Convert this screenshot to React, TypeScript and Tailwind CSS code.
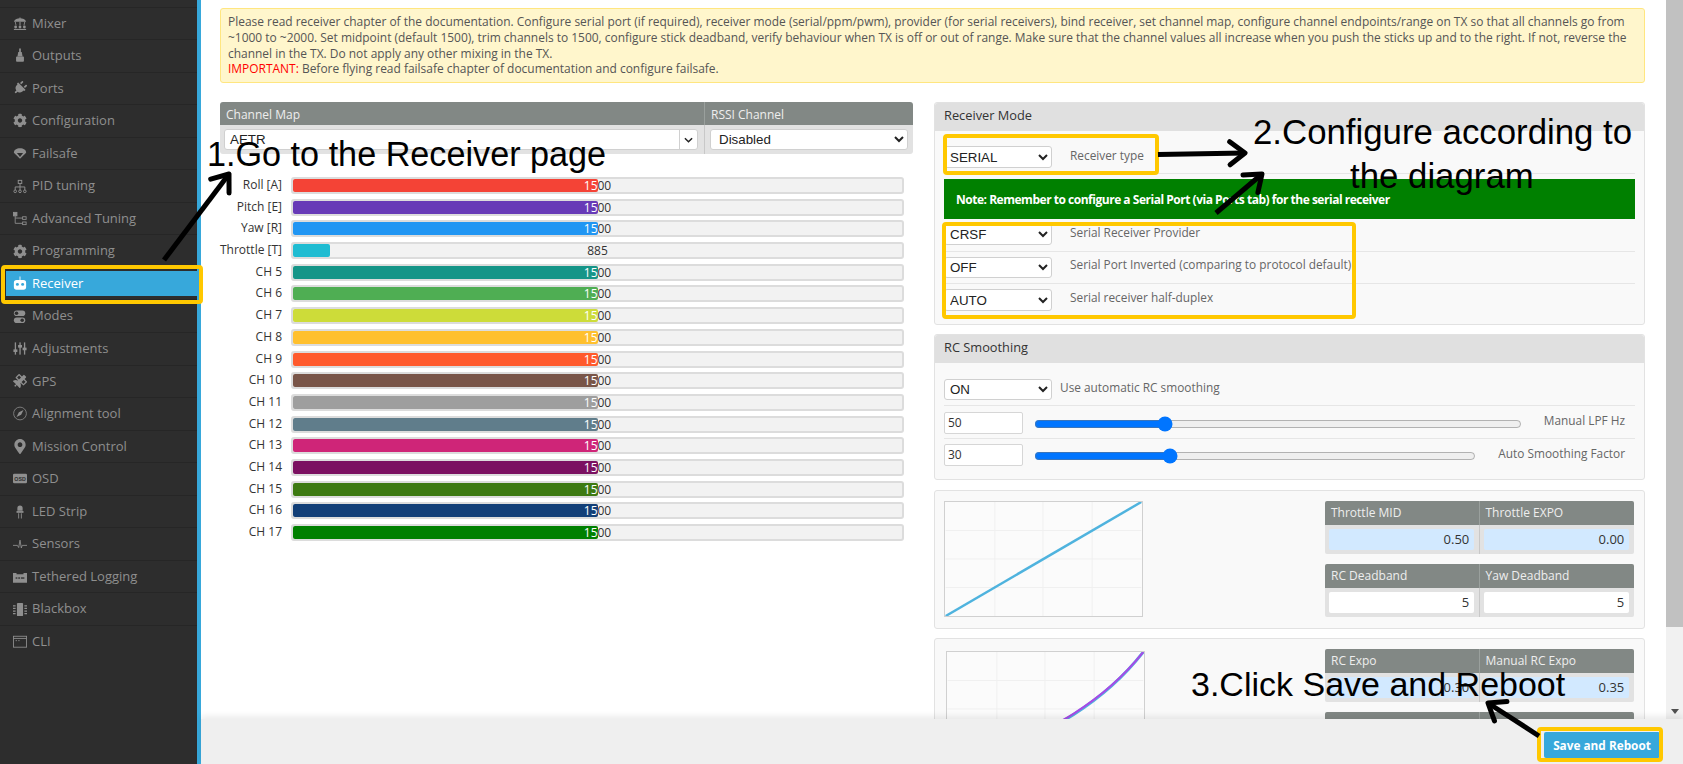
import React from "react";
import { FaCog, FaPlug, FaSatellite, FaMapMarkerAlt } from "react-icons/fa";

const Mixer = () => (
  <svg viewBox="0 0 16 16" width="15" height="15" fill="currentColor"><path d="M1 6c1-3 4-4 7-4s6 1 7 4z" /><rect x="7.5" y="1" width="1" height="2" /><path d="M7.4 6h1.2v4H7.4zM3 6l1 4H3L2 6zM13 6l-1 4h1l1-4z" /><circle cx="3" cy="12" r="1.6" /><circle cx="8" cy="12" r="1.6" /><circle cx="13" cy="12" r="1.6" /><rect x="1" y="14.2" width="14" height="1.2" /></svg>
);
const Outputs = () => (
  <svg viewBox="0 0 16 16" width="15" height="15" fill="currentColor"><rect x="7" y="0" width="2" height="4" /><path d="M6 4h4l1 5H5z" /><rect x="3.500" y="9" width="9" height="6" rx="1" /></svg>
);
const Parachute = () => (
  <svg viewBox="0 0 16 16" width="15" height="15" fill="currentColor"><path d="M1 7c0-3 3-5 7-5s7 2 7 5l-7 7z" /><path d="M4.500 7.500h7L8 12z" fill="#2d2d2d" /></svg>
);
const Tree = () => (
  <svg viewBox="0 0 16 16" width="15" height="15" fill="none" stroke="currentColor" strokeWidth="1.100"><rect x="6" y="1" width="4" height="3.500" /><path d="M8 4.500V12M2.500 12V8.500h11V12" /><circle cx="2.500" cy="13.500" r="1.500" /><circle cx="8" cy="13.500" r="1.500" /><circle cx="13.500" cy="13.500" r="1.500" /></svg>
);
const Advanced = () => (
  <svg viewBox="0 0 16 16" width="15" height="15" fill="none" stroke="currentColor" strokeWidth="1"><rect x="0.500" y="1" width="4" height="4" fill="currentColor" /><rect x="11" y="6" width="4" height="3" /><rect x="11" y="12" width="4" height="3" /><path d="M2.500 5v8.500H11M2.500 7.500H11" /></svg>
);
const Robot = () => (
  <svg viewBox="0 0 16 16" width="15" height="15" fill="#fff"><rect x="7.500" y="0" width="1" height="4" /><path d="M1 7a3 3 0 0 1 3-3h8a3 3 0 0 1 3 3v5a3 3 0 0 1-3 3H4a3 3 0 0 1-3-3z" /><circle cx="5" cy="9" r="1.700" fill="#37a8db" /><circle cx="11" cy="9" r="1.700" fill="#37a8db" /></svg>
);
const Modes = () => (
  <svg viewBox="0 0 16 16" width="15" height="15" fill="currentColor"><rect x="1" y="1" width="13" height="6.500" rx="3.200" /><rect x="1" y="9" width="13" height="6.500" rx="3.200" /><circle cx="10.500" cy="12.250" r="2" fill="#2d2d2d" /><circle cx="4" cy="4.250" r="2" fill="#2d2d2d" /></svg>
);
const Adjust = () => (
  <svg viewBox="0 0 16 16" width="15" height="15" fill="currentColor"><rect x="2" y="1" width="1.500" height="14" /><rect x="7.300" y="1" width="1.500" height="14" /><rect x="12.500" y="1" width="1.500" height="14" /><rect x="0.500" y="9" width="4.500" height="3" /><rect x="5.800" y="4" width="4.500" height="3" /><rect x="11" y="7" width="4.500" height="3" /></svg>
);
const Compass = () => (
  <svg viewBox="0 0 16 16" width="15" height="15"><circle cx="8" cy="8" r="7.300" fill="none" stroke="currentColor" strokeWidth="0.900" /><path d="M12 4L9.300 9.300 4 12l2.700-5.300z" fill="currentColor" /></svg>
);
const Osd = () => (
  <svg viewBox="0 0 16 12" width="15" height="11"><rect x="0" y="0.500" width="16" height="11" rx="1.500" fill="currentColor" /><text x="8" y="8.500" textAnchor="middle" fontSize="6" fontWeight="700" fontFamily="Liberation Sans, sans-serif" fill="#2d2d2d">OSD</text></svg>
);
const Led = () => (
  <svg viewBox="0 0 16 16" width="15" height="15" fill="currentColor"><path d="M5 7V4a3 3 0 0 1 6 0v3z" /><rect x="4" y="7.500" width="8" height="2" /><rect x="6" y="10" width="1" height="6" /><rect x="9" y="10" width="1" height="6" /></svg>
);
const Pulse = () => (
  <svg viewBox="0 0 16 16" width="15" height="15" fill="none" stroke="currentColor" strokeWidth="1"><path d="M0 9h5l1.500 2.500L8 3l1.500 9L10.500 9H16" /></svg>
);
const Tether = () => (
  <svg viewBox="0 0 16 16" width="15" height="15" fill="currentColor"><path d="M0 4h4v1.500h8V4h4v11H0z" /><rect x="3" y="9" width="2" height="1.500" fill="#2d2d2d" /><rect x="6" y="9" width="2" height="1.500" fill="#2d2d2d" /><rect x="9" y="9" width="4" height="1.500" fill="#2d2d2d" /></svg>
);
const Chip = () => (
  <svg viewBox="0 0 16 16" width="15" height="15" fill="currentColor"><rect x="4.500" y="0.500" width="7" height="15" rx="1" /><path d="M0 3h3v1.500H0zM0 6h3v1.500H0zM0 9h3v1.500H0zM0 12h3v1.500H0zM13 3h3v1.500h-3zM13 6h3v1.500h-3zM13 9h3v1.500h-3zM13 12h3v1.500h-3z" /></svg>
);
const Cli = () => (
  <svg viewBox="0 0 16 16" width="15" height="15" fill="none" stroke="currentColor" strokeWidth="1"><rect x="0.500" y="2" width="15" height="12.500" /><path d="M0.500 4.500h15" /><path d="M3 7h1.500M6 7h1.500" /></svg>
);

const nav: [string, React.ReactNode][] = [
  ["Mixer", <Mixer />],
  ["Outputs", <Outputs />],
  ["Ports", <FaPlug size={14} className="rotate-45" />],
  ["Configuration", <FaCog size={15} />],
  ["Failsafe", <Parachute />],
  ["PID tuning", <Tree />],
  ["Advanced Tuning", <Advanced />],
  ["Programming", <FaCog size={15} />],
  ["Receiver", <Robot />],
  ["Modes", <Modes />],
  ["Adjustments", <Adjust />],
  ["GPS", <FaSatellite size={14} />],
  ["Alignment tool", <Compass />],
  ["Mission Control", <FaMapMarkerAlt size={15} />],
  ["OSD", <Osd />],
  ["LED Strip", <Led />],
  ["Sensors", <Pulse />],
  ["Tethered Logging", <Tether />],
  ["Blackbox", <Chip />],
  ["CLI", <Cli />],
];

const channels: [string, string, number][] = [
  ["Roll [A]", "#f44336", 1500],
  ["Pitch [E]", "#673ab7", 1500],
  ["Yaw [R]", "#2196f3", 1500],
  ["Throttle [T]", "#1fbcd2", 885],
  ["CH 5", "#159588", 1500],
  ["CH 6", "#4fae53", 1500],
  ["CH 7", "#cddc39", 1500],
  ["CH 8", "#ffc02e", 1500],
  ["CH 9", "#ff5a2c", 1500],
  ["CH 10", "#795548", 1500],
  ["CH 11", "#9e9e9e", 1500],
  ["CH 12", "#607d8b", 1500],
  ["CH 13", "#cf2578", 1500],
  ["CH 14", "#7b1161", 1500],
  ["CH 15", "#3d7a12", 1500],
  ["CH 16", "#123f78", 1500],
  ["CH 17", "#008000", 1500],
];

const selectCls = "block bg-white border border-[#d0d0d0] rounded-[3px] text-[13.33px] text-[#222] [font-family:'Liberation_Sans',sans-serif]";

function Select({ value, className }: { value: string; className: string }) {
  return (
    <select defaultValue={value} className={`${selectCls} ${className}`}>
      <option>{value}</option>
    </select>
  );
}

function ChannelBar({ name, color, value }: { name: string; color: string; value: number }) {
  const pct = value === 885 ? 6.1 : 50;
  return (
    <div className="flex h-[21.7px] items-start">
      <div className="w-[62px] text-right text-[12px] leading-[16px] text-[#333] whitespace-nowrap">{name}</div>
      <div className="relative ml-[9px] h-[17px] w-[613px] rounded-[3px] border-2 border-[#dcdcdc] bg-[#f2f2f2] text-[12px] leading-[14px]">
        <div className="absolute inset-0 text-center text-[#333]">{value}</div>
        <div className="absolute inset-y-0 left-0 overflow-hidden rounded-[2px]" style={{ width: `${pct}%`, backgroundColor: color }}>
          <div className="w-[609px] text-center text-white">{value}</div>
        </div>
      </div>
    </div>
  );
}

function TableBlock({ a, b, va, vb, blue }: { a: string; b: string; va: string; vb: string; blue?: boolean }) {
  const cell = `h-[21px] w-[145px] rounded-[2px] px-[5px] text-right text-[13px] leading-[21px] text-[#333] ${blue ? "bg-[#d2e9ff]" : "bg-white"}`;
  return (
    <div className="w-[309px] overflow-hidden rounded-[2px]">
      <div className="grid h-[24px] grid-cols-2 bg-[#828885] text-[12px] leading-[24px] text-[#eee]">
        <div className="border-r border-[#9aa09d] pl-[6px]">{a}</div>
        <div className="pl-[6px]">{b}</div>
      </div>
      <div className="grid h-[29px] grid-cols-2 bg-[#e2e2e2]">
        <div className="flex items-center justify-center border-r border-[#c8c8c8]"><div className={cell}>{va}</div></div>
        <div className="flex items-center justify-center"><div className={cell}>{vb}</div></div>
      </div>
    </div>
  );
}

function CurveGrid() {
  return (
    <g stroke="#f0f0f0" strokeWidth="1">
      <path d="M50 0V116M99 0V116M149 0V116M0 29H199M0 58H199M0 87H199" />
    </g>
  );
}

function Panel({ title, className, children }: { title?: string; className: string; children: React.ReactNode }) {
  return (
    <div className={`rounded-[3px] border border-[#e2e2e2] bg-[#f9f9f9] ${className}`}>
      {title && <div className="h-[28px] rounded-t-[3px] bg-[#e0e0e0] pl-[9px] text-[12.8px] leading-[25px] text-[#333]">{title}</div>}
      {children}
    </div>
  );
}

function Note({ className, children }: { className: string; children: React.ReactNode }) {
  return <div className={`absolute whitespace-nowrap text-center leading-[44px] text-black [font-family:'Liberation_Sans',sans-serif] ${className}`}>{children}</div>;
}

function Arrow({ x1, y1, x2, y2 }: { x1: number; y1: number; x2: number; y2: number }) {
  const a = Math.atan2(y2 - y1, x2 - x1);
  const L = 19;
  const p = (d: number) => `${x2 - L * Math.cos(a + d)},${y2 - L * Math.sin(a + d)}`;
  return (
    <g stroke="#000" fill="none" strokeLinecap="round" strokeLinejoin="round">
      <path d={`M${x1} ${y1}L${x2} ${y2}`} strokeWidth="5" strokeLinecap="butt" />
      <path d={`M${p(0.65)}L${x2} ${y2}L${p(-0.65)}`} strokeWidth="5" />
    </g>
  );
}

export default function App() {
  return (
    <div className="relative flex h-[764px] w-[1683px] overflow-hidden bg-white [font-family:'Open_Sans',sans-serif]">
      <aside className="h-full w-[201px] shrink-0 border-r-4 border-[#37a8db] bg-[#2d2d2d] pt-[6.5px]">
        {nav.map(([label, icon]) => {
          const active = label === "Receiver";
          return (
            <div key={label} className={`h-[32.55px] border-t border-[#262626] ${active ? "p-[3px_0_3px_6px]" : ""}`}>
              <div className={`flex h-full items-center text-[13px] ${active ? "bg-[#37a8db] text-white" : "text-[#8f8f8f]"}`}>
                <span className={`flex items-center justify-center ${active ? "ml-[7px] mr-[5px] w-[14px]" : "ml-[13px] mr-[5px] w-[14px]"}`}>{icon}</span>
                <span>{label}</span>
              </div>
            </div>
          );
        })}
      </aside>

      <main className="flex h-full min-w-0 flex-1 flex-col">
        <div className="flex h-[719px] overflow-hidden">
          <div className="h-full w-[1465px] overflow-hidden pl-[19px] pr-[21px] pt-[8px]">
            <div className="h-[75px] rounded-[3px] border border-[#ffe680] bg-[#fff6cc] px-[7px] pt-[5px] text-[11.96px] leading-[15.8px] text-[#555]">
              Please read receiver chapter of the documentation. Configure serial port (if required), receiver mode (serial/ppm/pwm), provider (for serial receivers), bind receiver, set channel map, configure channel endpoints/range on TX so that all channels go from ~1000 to ~2000. Set midpoint (default 1500), trim channels to 1500, configure stick deadband, verify behaviour when TX is off or out of range. Make sure that the channel values all increase when you push the sticks up and to the right. If not, reverse the channel in the TX. Do not apply any other mixing in the TX.
              <br />
              <span className="text-[#ff0000]">IMPORTANT:</span> Before flying read failsafe chapter of documentation and configure failsafe.
            </div>

            <div className="mt-[19px] grid grid-cols-[693px_711px] gap-x-[21px]">
              <div>
                <div className="overflow-hidden rounded-[3px]">
                  <div className="grid h-[23px] grid-cols-[485px_208px] bg-[#828885] text-[12px] leading-[25px] text-[#eee]">
                    <div className="border-r border-[#9aa09d] pl-[6px]">Channel Map</div>
                    <div className="pl-[6px]">RSSI Channel</div>
                  </div>
                  <div className="grid h-[29px] grid-cols-[485px_208px] bg-[#e2e2e2]">
                    <div className="border-r border-[#c8c8c8] pl-[4px] pt-[4px]">
                      <div className="flex h-[21px] w-[474px] items-center justify-between rounded-[3px] border border-[#d0d0d0] bg-white pl-[5px] text-[13.33px] text-[#222] [font-family:'Liberation_Sans',sans-serif]">
                        <span>AETR</span>
                        <span className="flex h-full w-[18px] items-center justify-center border-l border-[#d0d0d0]">
                          <svg viewBox="0 0 10 6" width="9" height="6" fill="none" stroke="#222" strokeWidth="1.600"><path d="M1 1l4 4 4-4" /></svg>
                        </span>
                      </div>
                    </div>
                    <div className="pl-[5px] pt-[4px]"><Select value="Disabled" className="h-[21px] w-[198px] pl-[4px]" /></div>
                  </div>
                </div>
                <div className="mt-[23px]">
                  {channels.map(([n, c, v]) => <ChannelBar key={n} name={n} color={c} value={v} />)}
                </div>
              </div>

              <div>
                <Panel title="Receiver Mode" className="h-[223px]">
                  <div className="px-[9px] text-[11.85px] text-[#666]">
                    <div className="flex h-[43px] items-start border-b border-[#e6e6e6] pt-[15px]">
                      <Select value="SERIAL" className="h-[22px] w-[108px] pl-[1px]" />
                      <span className="ml-[18px] mt-[-1px] leading-[20px]">Receiver type</span>
                    </div>
                    <div className="mt-[5px] flex h-[40px] items-center bg-[#008000] pl-[12px] pt-[1px] font-bold text-[12px] text-white tracking-[-0.48px]">
                      Note: Remember to configure a Serial Port (via Ports tab) for the serial receiver
                    </div>
                    <div className="flex h-[33px] items-start border-b border-[#e6e6e6] pt-[5px]">
                      <Select value="CRSF" className="h-[21px] w-[108px] pl-[1px]" />
                      <span className="ml-[18px] mt-[-2px] leading-[20px]">Serial Receiver Provider</span>
                    </div>
                    <div className="flex h-[32px] items-start border-b border-[#e6e6e6] pt-[5px]">
                      <Select value="OFF" className="h-[21px] w-[108px] pl-[1px]" />
                      <span className="ml-[18px] mt-[-3px] leading-[20px]">Serial Port Inverted (comparing to protocol default)</span>
                    </div>
                    <div className="flex h-[36px] items-start pt-[5px]">
                      <Select value="AUTO" className="h-[22px] w-[108px] pl-[1px]" />
                      <span className="ml-[18px] mt-[-2px] leading-[20px]">Serial receiver half-duplex</span>
                    </div>
                  </div>
                </Panel>

                <Panel title="RC Smoothing" className="mt-[9px] h-[146px]">
                  <div className="px-[9px] text-[11.85px] text-[#666]">
                    <div className="flex h-[43px] items-start border-b border-[#e6e6e6] pt-[16px]">
                      <Select value="ON" className="h-[21px] w-[108px] pl-[1px]" />
                      <span className="ml-[8px] mt-[-2px] leading-[20px]">Use automatic RC smoothing</span>
                    </div>
                    <div className="flex h-[33px] items-center border-b border-[#e6e6e6]">
                      <div className="mt-[1px] h-[22px] w-[79px] rounded-[2px] border border-[#d6d6d6] bg-white pl-[3px] text-[12px] leading-[20px] text-[#333]">50</div>
                      <input type="range" defaultValue={26} className="ml-[11px] mt-[3px] h-[16px] w-[488px] accent-[#0075ff]" />
                      <span className="ml-auto mr-[10px] mt-[-3px]">Manual LPF Hz</span>
                    </div>
                    <div className="flex h-[32px] items-center">
                      <div className="h-[22px] w-[79px] rounded-[2px] border border-[#d6d6d6] bg-white pl-[3px] text-[12px] leading-[20px] text-[#333]">30</div>
                      <input type="range" defaultValue={30} className="ml-[11px] mt-[2px] h-[16px] w-[442px] accent-[#0075ff]" />
                      <span className="ml-auto mr-[10px] mt-[-3px]">Auto Smoothing Factor</span>
                    </div>
                  </div>
                </Panel>

                <Panel className="mt-[10px] flex h-[139px] justify-between pl-[9px] pr-[10px] pt-[10px]">
                  <svg viewBox="0 0 199 116" className="h-[116px] w-[199px] border border-[#d0d0d0] bg-[#fbfbfb]">
                    <CurveGrid />
                    <path d="M0 116L199 0" stroke="#4fb3de" strokeWidth="2.500" fill="none" />
                  </svg>
                  <div className="flex flex-col gap-[10px]">
                    <TableBlock a="Throttle MID" b="Throttle EXPO" va="0.50" vb="0.00" blue />
                    <TableBlock a="RC Deadband" b="Yaw Deadband" va="5" vb="5" />
                  </div>
                </Panel>

                <Panel className="mt-[9px] flex h-[200px] justify-between pl-[11px] pr-[10px] pt-[10px]">
                  <svg viewBox="0 0 199 116" className="mt-[2px] h-[116px] w-[199px] border border-[#d0d0d0] bg-[#fbfbfb]">
                    <CurveGrid />
                    <path d="M20 116C110 80 160 50 199 0" stroke="#4fb3de" strokeWidth="3" fill="none" />
                    <path d="M20 115C110 79 160 49 199 0" stroke="#a64be6" strokeWidth="2.200" fill="none" />
                  </svg>
                  <div className="flex flex-col gap-[10px]">
                    <TableBlock a="RC Expo" b="Manual RC Expo" va="0.30" vb="0.35" blue />
                    <TableBlock a="" b="" va="" vb="" />
                  </div>
                </Panel>
              </div>
            </div>
          </div>

          <div className="flex h-full w-[17px] flex-col bg-[#f1f1f1]">
            <div className="h-[627px] bg-[#c1c1c1]" />
            <div className="mt-auto mb-[3px] flex h-[9px] justify-center">
              <div className="mt-[2px] h-0 w-0 border-x-[4px] border-t-[5px] border-x-transparent border-t-[#505050]" />
            </div>
          </div>
        </div>

        <div className="relative flex h-[45px] justify-end bg-[#efefef] pr-[23px] pt-[13px] shadow-[0_-3px_6px_rgba(0,0,0,0.08)]">
          <div className="flex h-[26px] w-[116px] items-center justify-center rounded-[2px] bg-[#37a8db] pt-[1px] text-[11.8px] font-bold text-white">Save and Reboot</div>
        </div>
      </main>

      <div className="pointer-events-none absolute left-[1px] top-[265px] h-[39px] w-[202px] rounded-[4px] border-[4px] border-[#ffc800]" />
      <div className="pointer-events-none absolute left-[943px] top-[134px] h-[41px] w-[216px] rounded-[4px] border-[4px] border-[#ffc800]" />
      <div className="pointer-events-none absolute left-[942px] top-[222px] h-[97px] w-[414px] rounded-[4px] border-[4px] border-[#ffc800]" />
      <div className="pointer-events-none absolute left-[1537px] top-[727px] h-[35px] w-[126px] rounded-[4px] border-[4px] border-[#ffc800]" />

      <Note className="left-[207px] top-[132px] text-[34.2px]">1.Go to the Receiver page</Note>
      <Note className="left-[1253px] top-[110px] text-[34.8px]">2.Configure according to</Note>
      <Note className="left-[1350px] top-[154px] text-[34.8px]">the diagram</Note>
      <Note className="left-[1191px] top-[662px] text-[34px]">3.Click Save and Reboot</Note>

      <svg className="pointer-events-none absolute inset-0" width="1683" height="764">
        <Arrow x1={164} y1={260} x2={229} y2={174} />
        <Arrow x1={1158} y1={154.500} x2={1245} y2={153} />
        <Arrow x1={1216} y1={213} x2={1262} y2={174} />
        <Arrow x1={1539} y1={736} x2={1488} y2={703} />
      </svg>
    </div>
  );
}
